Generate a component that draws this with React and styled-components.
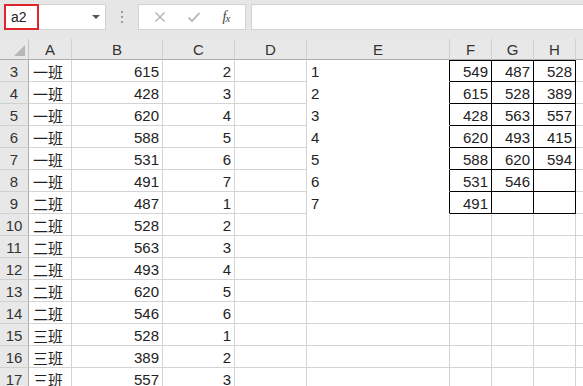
import React from 'react'
import styled, { createGlobalStyle } from 'styled-components'

const GlobalStyle = createGlobalStyle`
  body {
    margin: 0;
    background: #ffffff;
    overflow: hidden;
  }
`

const columns = [
  { key: 'A', width: 43 },
  { key: 'B', width: 91 },
  { key: 'C', width: 72 },
  { key: 'D', width: 72 },
  { key: 'E', width: 143 },
  { key: 'F', width: 42 },
  { key: 'G', width: 42 },
  { key: 'H', width: 42 },
]

const rows = [
  [3, '一班', 615, 2, 1, 549, 487, 528],
  [4, '一班', 428, 3, 2, 615, 528, 389],
  [5, '一班', 620, 4, 3, 428, 563, 557],
  [6, '一班', 588, 5, 4, 620, 493, 415],
  [7, '一班', 531, 6, 5, 588, 620, 594],
  [8, '一班', 491, 7, 6, 531, 546, ''],
  [9, '二班', 487, 1, 7, 491, '', ''],
  [10, '二班', 528, 2],
  [11, '二班', 563, 3],
  [12, '二班', 493, 4],
  [13, '二班', 620, 5],
  [14, '二班', 546, 6],
  [15, '三班', 528, 1],
  [16, '三班', 389, 2],
  [17, '三班', 557, 3],
]

const Window = styled.div`
  width: 583px;
  height: 386px;
  overflow: hidden;
  font-family: "Liberation Sans", "Noto Sans CJK SC", sans-serif;
  color: #222;
`

const FormulaBar = styled.div`
  display: flex;
  align-items: flex-start;
  height: 39px;
  box-sizing: border-box;
  padding: 4px 0 0 4px;
  background: #e6e6e6;
`

const NameBox = styled.div`
  display: flex;
  align-items: center;
  width: 102px;
  height: 26px;
  box-sizing: border-box;
  background: #fff;
  border: 1px solid #d2d2d2;
`

const NameField = styled.div`
  width: 35px;
  height: 26px;
  margin: -1px 0 0 -1px;
  box-sizing: border-box;
  border: 2px solid #e0262d;
  padding-left: 5px;
  font-size: 14px;
  line-height: 22px;
  color: #222;
`

const DropArrow = styled.div`
  margin-left: auto;
  margin-right: 5px;
  width: 0;
  height: 0;
  border-left: 4px solid transparent;
  border-right: 4px solid transparent;
  border-top: 4px solid #555;
`

const Dots = styled.div`
  width: 32px;
  height: 26px;
  display: flex;
  flex-direction: column;
  align-items: center;
  justify-content: center;
  gap: 3px;

  span {
    width: 2px;
    height: 2px;
    background: #9a9a9a;
  }
`

const FxBox = styled.div`
  display: flex;
  align-items: center;
  justify-content: space-around;
  width: 108px;
  height: 26px;
  box-sizing: border-box;
  background: #fff;
  border: 1px solid #d2d2d2;
  padding: 0 4px;
`

const FxLabel = styled.span`
  font-family: "Liberation Serif", serif;
  font-style: italic;
  font-size: 14px;
  color: #444;

  sub {
    font-size: 11px;
    vertical-align: -1px;
    margin-left: -1px;
  }
`

const FormulaInput = styled.div`
  flex: 1;
  height: 26px;
  margin-left: 5px;
  box-sizing: border-box;
  background: #fff;
  border: 1px solid #d2d2d2;
  border-right: none;
`

const Sheet = styled.div`
  display: grid;
  grid-template-columns: 29px ${columns.map((c) => `${c.width}px`).join(' ')} 1fr;
  grid-auto-rows: 22px;
  grid-template-rows: 21px;
  font-size: 15px;
`

const Corner = styled.div`
  position: relative;
  background: #e8e8e8;
  border-right: 1px solid #c6c6c6;
  border-bottom: 1px solid #ababab;
  box-sizing: border-box;

  &::after {
    content: '';
    position: absolute;
    right: 3px;
    bottom: 3px;
    border-left: 11px solid transparent;
    border-bottom: 11px solid #b7b7b7;
  }
`

const ColHead = styled.div`
  display: flex;
  align-items: center;
  justify-content: center;
  background: #e8e8e8;
  border-right: 1px solid #d0d0d0;
  border-bottom: 1px solid #ababab;
  box-sizing: border-box;
  color: #333;
`

const RowHead = styled.div`
  display: flex;
  align-items: center;
  justify-content: center;
  background: #e8e8e8;
  border-right: 1px solid #ababab;
  border-bottom: 1px solid #d0d0d0;
  box-sizing: border-box;
  color: #333;
  padding-top: 2px;
`

const Cell = styled.div`
  display: flex;
  align-items: center;
  justify-content: ${({ $right }) => ($right ? 'flex-end' : 'flex-start')};
  padding: 1px 3px 0 4px;
  box-sizing: border-box;
  white-space: nowrap;
  background: #fff;
  border-right: 1px solid ${({ $edge }) => ($edge ? '#000' : '#d4d4d4')};
  border-bottom: 1px solid
    ${({ $boxed, $plain }) => ($boxed ? '#000' : $plain ? '#fff' : '#d4d4d4')};
  border-top: ${({ $top }) => ($top ? '1px solid #000' : 'none')};
`

function FxIcons() {
  return (
    <FxBox>
      <svg width="12" height="12" viewBox="0 0 12 12">
        <path d="M1.5 1.5 L10.5 10.5 M10.5 1.5 L1.5 10.5" stroke="#b0b0b0" strokeWidth="1.3" fill="none" />
      </svg>
      <svg width="14" height="12" viewBox="0 0 14 12">
        <path d="M1.5 6.5 L5 10 L12.5 2" stroke="#b0b0b0" strokeWidth="1.6" fill="none" />
      </svg>
      <FxLabel>
        f<sub>x</sub>
      </FxLabel>
    </FxBox>
  )
}

export default function App() {
  return (
    <Window>
      <GlobalStyle />
      <FormulaBar>
        <NameBox>
          <NameField>a2</NameField>
          <DropArrow />
        </NameBox>
        <Dots>
          <span />
          <span />
          <span />
        </Dots>
        <FxIcons />
        <FormulaInput />
      </FormulaBar>

      <Sheet>
        <Corner />
        {columns.map((c) => (
          <ColHead key={c.key}>{c.key}</ColHead>
        ))}
        <ColHead>&nbsp;</ColHead>

        {rows.map((r, i) => {
          const [num, cls, score, rank, e, f, g, h] = r
          const inTable = r.length > 4
          const first = i === 0
          return (
            <React.Fragment key={num}>
              <RowHead>{num}</RowHead>
              <Cell>{cls}</Cell>
              <Cell $right>{score}</Cell>
              <Cell $right>{rank}</Cell>
              <Cell />
              <Cell $plain={inTable} $edge={inTable}>{e}</Cell>
              {[f, g, h].map((v, j) => (
                <Cell key={j} $right $boxed={inTable} $edge={inTable} $top={inTable && first}>
                  {v}
                </Cell>
              ))}
              <Cell />
            </React.Fragment>
          )
        })}
      </Sheet>
    </Window>
  )
}
